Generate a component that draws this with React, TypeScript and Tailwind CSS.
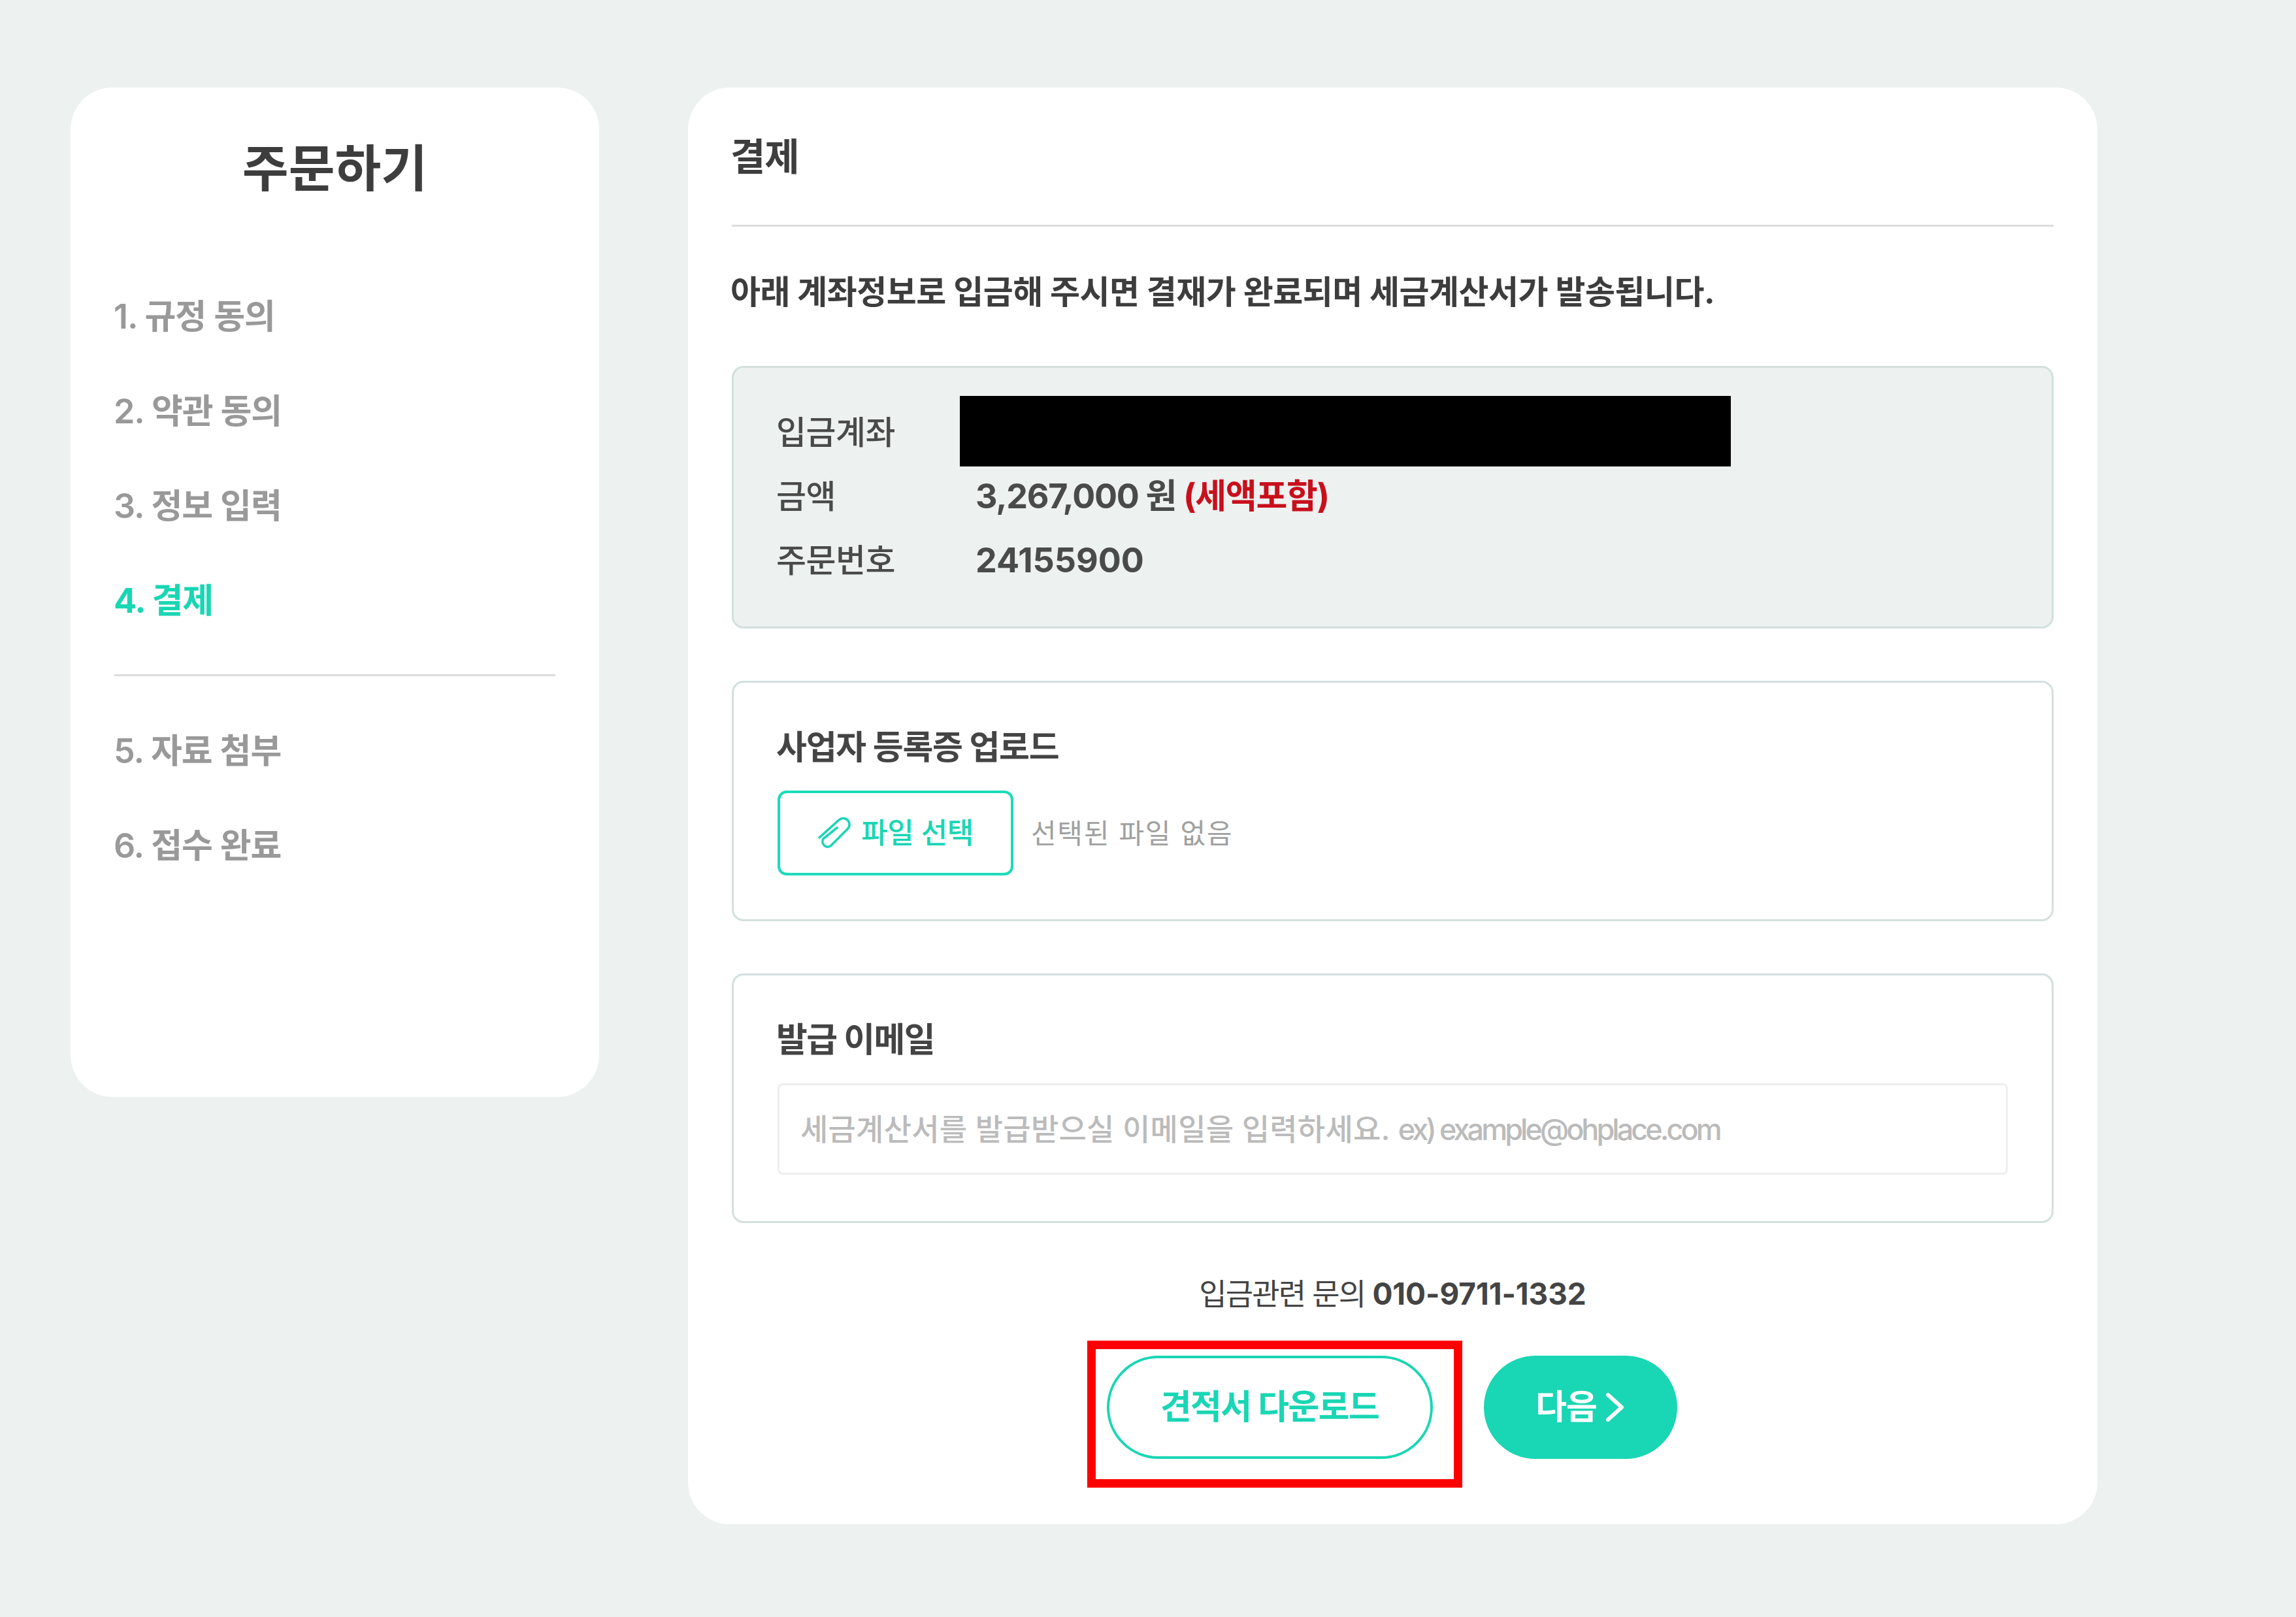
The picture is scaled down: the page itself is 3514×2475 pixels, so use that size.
import React from "react";

function Step({ label, active }: { label: string; active?: boolean }) {
  return (
    <div className={active ? "h-[145px] flex items-center text-[52px] font-bold text-[#19d6b4] tracking-[-0.02em] -ml-[1px]" : "h-[145px] flex items-center text-[52px] font-semibold text-[#999999] tracking-[-0.02em] -ml-[1px]"}>
      {label}
    </div>
  );
}

function Clip() {
  return (
    <svg width="52" height="52" viewBox="70 50 52 52" fill="none" stroke="#19d6b4" strokeWidth="3.6" strokeLinecap="round" strokeLinejoin="round">
      <path d="M73 83 103 56A9.5 9.5 0 0 1 116 70L90 96A8 8 0 0 1 79 85L100 68" />
    </svg>
  );
}

export default function App() {
  return (
    <div className="relative w-[3514px] h-[2475px] bg-[#edf1f0] font-['Inter','Noto_Sans_CJK_KR',sans-serif] text-[#444444] flex items-start gap-[136px] pl-[108px] pt-[134px]">
      <aside className="w-[809px] h-[1545px] bg-white rounded-[64px] px-[67px] shrink-0">
        <h1 className="h-[250px] pt-[74px] text-center text-[77px] leading-[100px] font-bold text-[#3d3d3d]">주문하기</h1>
        <div className="mt-[28px]">
          <Step label="1. 규정 동의" />
          <Step label="2. 약관 동의" />
          <Step label="3. 정보 입력" />
          <Step label="4. 결제" active />
        </div>
        <div className="h-[3px] bg-[#dddddd] mt-[40px] mb-[42px]" />
        <Step label="5. 자료 첨부" />
        <Step label="6. 접수 완료" />
      </aside>

      <main className="w-[2157px] h-[2199px] bg-white rounded-[64px] px-[67px] shrink-0">
        <div className="h-[213px] border-b-[3px] border-[#dddddd] pt-[72px]">
          <h2 className="-ml-[2px] text-[58px] leading-[68px] font-bold text-[#3d3d3d] tracking-[-0.02em]">결제</h2>
        </div>
        <p className="-ml-[2px] mt-[60px] h-[80px] text-[50px] leading-[80px] font-bold text-[#3d3d3d] tracking-[-0.01em]">
          아래 계좌정보로 입금해 주시면 결재가 완료되며 세금계산서가 발송됩니다.
        </p>
        <section className="mt-[73px] h-[402px] rounded-[18px] border-[3px] border-[#d3e0de] bg-[#edf1f0] pl-[65px] pt-[43px]">
          <div className="flex h-[108px] items-center">
            <span className="w-[281px] pt-[4px] text-[50px] font-medium text-[#4a4a4a] tracking-[-0.01em]">입금계좌</span>
            <span className="w-[1180px] h-[108px] bg-black" />
          </div>
          <div className="flex h-[98px] items-center -mt-[3px]">
            <span className="w-[305px] text-[50px] font-medium text-[#4a4a4a] tracking-[-0.01em]">금액</span>
            <span className="text-[52px] font-bold text-[#4a4a4a] tracking-[-0.025em]">3,267,000 원 <span className="text-[#c8101c]">(세액포함)</span></span>
          </div>
          <div className="flex h-[98px] items-center">
            <span className="w-[305px] text-[50px] font-medium text-[#4a4a4a] tracking-[-0.01em]">주문번호</span>
            <span className="text-[52px] font-bold text-[#4a4a4a]">24155900</span>
          </div>
        </section>

        <section className="mt-[80px] h-[368px] rounded-[18px] border-[3px] border-[#d3e0de] bg-white px-[67px] pt-[64px]">
          <h3 className="-ml-[2px] h-[70px] text-[51px] leading-[70px] font-bold text-[#444444] tracking-[-0.025em]">사업자 등록증 업로드</h3>
          <div className="mt-[31px] flex items-center gap-[27px]">
            <div className="w-[361px] h-[130px] rounded-[14px] border-[4px] border-[#19dcb8] flex items-center justify-center gap-[15px]">
              <Clip />
              <span className="text-[44px] font-medium text-[#19d6b4] tracking-[-0.01em]">파일 선택</span>
            </div>
            <span className="text-[42px] text-[#a0a0a0] tracking-[0.04em]">선택된 파일 없음</span>
          </div>
        </section>

        <section className="mt-[80px] h-[382px] rounded-[18px] border-[3px] border-[#d3e0de] bg-white px-[67px] pt-[64px]">
          <h3 className="-ml-[2px] h-[70px] text-[52px] leading-[70px] font-bold text-[#444444] tracking-[-0.03em]">발급 이메일</h3>
          <div className="mt-[31px] h-[140px] rounded-[8px] border-[3px] border-[#eeeeee] flex items-center px-[32px]">
            <span className="text-[46px] font-medium text-[#bbbbbb] tracking-[0.005em] whitespace-nowrap">
              세금계산서를 발급받으실 이메일을 입력하세요. <span className="text-[45px] tracking-[-0.088em]">ex) example@ohplace.com</span>
            </span>
          </div>
        </section>

        <p className="mt-[78px] h-[60px] text-center text-[46px] leading-[60px] text-[#444444] tracking-[-0.04em]">
          입금관련 문의 <b className="font-bold tracking-[-0.002em]">010-9711-1332</b>
        </p>
        <div className="mt-[65px] flex items-center justify-center gap-[78px] pr-[3px]">
          <div className="relative w-[499px] h-[158px] rounded-full border-[4px] border-[#19d6b4] flex items-center justify-center text-[52px] font-bold text-[#19d6b4] tracking-[-0.03em]">
            견적서 다운로드
            <div className="absolute -left-[34px] -top-[27px] w-[574px] h-[225px] border-[13px] border-[#ff0000]" />
          </div>
          <div className="w-[296px] h-[158px] rounded-full bg-[#19d6b4] flex items-center justify-center gap-[13px] text-[52px] font-bold text-white tracking-[-0.02em]">
            다음
            <svg width="30" height="46" viewBox="0 0 30 46" fill="none" stroke="white" strokeWidth="6" strokeLinecap="round" strokeLinejoin="round"><path d="M4 4 25 23 4 42" /></svg>
          </div>
        </div>
      </main>
    </div>
  );
}
